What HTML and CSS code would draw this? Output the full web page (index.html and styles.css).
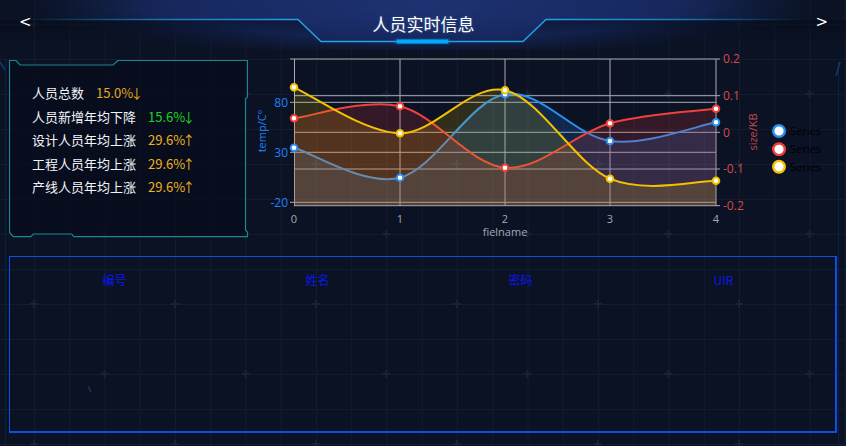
FILE: index.html
```html
<!DOCTYPE html>
<html lang="zh-CN">
<head>
<meta charset="utf-8">
<title>人员实时信息</title>
<link rel="stylesheet" href="styles.css">
</head>
<body>
<div class="screen">
  <svg class="bg-grid" width="846" height="446" viewBox="0 0 846 446" aria-hidden="true">
    <defs>
      <pattern id="gridp" patternUnits="userSpaceOnUse" x="34" y="24" width="35.25" height="35">
        <path d="M0.5,0 V35 M0,0.5 H35.25" stroke="#121b30" stroke-width="1" fill="none"/>
      </pattern>
      <pattern id="crossp" patternUnits="userSpaceOnUse" x="24" y="14" width="141" height="140">
        <path d="M6,10 H14 M10,6 V14 M76.5,80 H84.5 M80.5,76 V84" stroke="#1a2336" stroke-width="2" fill="none"/>
      </pattern>
    </defs>
    <rect width="846" height="446" fill="url(#gridp)"/>
    <rect width="846" height="446" fill="url(#crossp)"/>
    <path d="M5.5,60 V446 M838.5,62 V446" stroke="#0c2142" stroke-width="1"/>
    <path d="M0,62 L5,70 M836,76 L840,62 M88,386 L91,392" stroke="#123a6e" stroke-width="1.5"/>
  </svg>

  <header class="top">
    <svg class="top-deco" width="846" height="50" viewBox="0 0 846 50" aria-hidden="true">
      <defs>
        <radialGradient id="glow" cx="423" cy="6" r="420" gradientUnits="userSpaceOnUse" gradientTransform="translate(423 6) scale(1 0.13) translate(-423 -6)">
          <stop offset="0" stop-color="#1e3273"/>
          <stop offset="0.6" stop-color="#17285e"/>
          <stop offset="1" stop-color="#0a1223" stop-opacity="0"/>
        </radialGradient>
        <linearGradient id="lineg" x1="0" y1="0" x2="846" y2="0" gradientUnits="userSpaceOnUse">
          <stop offset="0.02" stop-color="#1a8fd0" stop-opacity="0"/>
          <stop offset="0.2" stop-color="#1a8fd0" stop-opacity="0.8"/>
          <stop offset="0.36" stop-color="#20a4ec"/>
          <stop offset="0.64" stop-color="#20a4ec"/>
          <stop offset="0.8" stop-color="#1a8fd0" stop-opacity="0.8"/>
          <stop offset="0.95" stop-color="#1a8fd0" stop-opacity="0"/>
        </linearGradient>
        <linearGradient id="shade" x1="0" y1="20" x2="0" y2="44" gradientUnits="userSpaceOnUse">
          <stop offset="0" stop-color="#050a16" stop-opacity="0.55"/>
          <stop offset="1" stop-color="#050a16" stop-opacity="0"/>
        </linearGradient>
      </defs>
      <rect x="0" y="0" width="846" height="50" fill="url(#glow)"/>
      <path d="M0,0 H846 V19.5 H546 L523,41 H321 L298,19.5 H0 Z" fill="url(#glow)"/>
      <path d="M0,20 H298 L321,42 H523 L546,20 H846 V44 H0 Z" fill="url(#shade)"/>
      <path d="M0,19.5 H298 L321,41.5 H523 L546,19.5 H846" fill="none" stroke="url(#lineg)" stroke-width="1.3"/>
      <rect x="397" y="39.5" width="51" height="4" fill="#00aaff"/>
      <rect x="395" y="38.5" width="55" height="6" fill="#00aaff" opacity="0.25"/>
    </svg>
    <span class="nav nav-prev">&lt;</span>
    <h1 class="title">人员实时信息</h1>
    <span class="nav nav-next">&gt;</span>
  </header>

  <section class="main">
    <div class="stats">
      <svg class="stats-frame" width="239" height="178" viewBox="0 0 239 178" aria-hidden="true">
        <path d="M0.5,0.5 L7,0.5 L11,5 L104,5 L109,0.5 L238.5,0.5 L238.5,37 L236.5,39 L236.5,170 L238.5,172 L238.5,176.7 L65,176.7 L62.7,174 L24.3,174 L21.7,176.7 L4.3,176.7 L0.5,172.3 Z" fill="#060c1b" fill-opacity="0.7" stroke="#178890" stroke-width="1.2"/>
      </svg>
      <ul class="stat-list">
        <li><span class="label">人员总数</span><span class="val gold">15.0<span class="pct">%</span>↓</span></li>
        <li><span class="label">人员新增年均下降</span><span class="val green">15.6<span class="pct">%</span>↓</span></li>
        <li><span class="label">设计人员年均上涨</span><span class="val yellow">29.6<span class="pct">%</span>↑</span></li>
        <li><span class="label">工程人员年均上涨</span><span class="val yellow">29.6<span class="pct">%</span>↑</span></li>
        <li><span class="label">产线人员年均上涨</span><span class="val yellow">29.6<span class="pct">%</span>↑</span></li>
      </ul>
    </div>

    <div class="chart">
      <svg width="598" height="190" viewBox="248 50 598 190">
        <g class="grid" stroke="#c9c9cc" stroke-width="1" fill="none" opacity="0.85">
          <path d="M294,59 H716 M290,59 H294 M716,59 H720"/>
          <path d="M294,95.7 H720"/>
          <path d="M290,102.3 H716"/>
          <path d="M294,132.3 H720"/>
          <path d="M290,152.3 H716"/>
          <path d="M294,169 H720"/>
          <path d="M290,202.3 H716"/>
          <path d="M294,205.7 H720"/>
          <path d="M294.5,59 V206 M400,59 V206 M505,59 V206 M610,59 V206 M716,59 V206"/>
        </g>

        <path d="M294,147.7 C311.7,152.7 364.8,186.6 400,177.7 C435.2,168.8 470,100.4 505,94.3 C540,88.2 574.8,136.3 610,141 C645.2,145.7 698.3,125.4 716,122.3 L716,205 L294,205 Z" fill="#1e90ff" fill-opacity="0.18"/>
        <path d="M294,147.7 C311.7,152.7 364.8,186.6 400,177.7 C435.2,168.8 470,100.4 505,94.3 C540,88.2 574.8,136.3 610,141 C645.2,145.7 698.3,125.4 716,122.3" fill="none" stroke="#2a8ff0" stroke-width="2"/>

        <path d="M294,118.3 C311.7,116.3 364.8,98.1 400,106.3 C435.2,114.5 470,164.9 505,167.7 C540,170.5 574.8,133.1 610,123.3 C645.2,113.5 698.3,111.1 716,108.7 L716,205 L294,205 Z" fill="#f03c3c" fill-opacity="0.18"/>
        <path d="M294,118.3 C311.7,116.3 364.8,98.1 400,106.3 C435.2,114.5 470,164.9 505,167.7 C540,170.5 574.8,133.1 610,123.3 C645.2,113.5 698.3,111.1 716,108.7" fill="none" stroke="#f0403c" stroke-width="2"/>

        <path d="M294,87.3 C311.7,95 364.8,132.8 400,133.3 C435.2,133.8 470,82.7 505,90.3 C540,97.9 574.8,163.6 610,178.7 C645.2,193.8 698.3,180.4 716,180.7 L716,205 L294,205 Z" fill="#f5c000" fill-opacity="0.16"/>
        <path d="M294,87.3 C311.7,95 364.8,132.8 400,133.3 C435.2,133.8 470,82.7 505,90.3 C540,97.9 574.8,163.6 610,178.7 C645.2,193.8 698.3,180.4 716,180.7" fill="none" stroke="#f5c000" stroke-width="2"/>

        <g fill="#ffffff" stroke-width="2">
          <g stroke="#2a8ff0">
            <circle cx="294" cy="147.7" r="3.3"/><circle cx="400" cy="177.7" r="3.3"/><circle cx="505" cy="94.3" r="3.3"/><circle cx="610" cy="141" r="3.3"/><circle cx="716" cy="122.3" r="3.3"/>
          </g>
          <g stroke="#f0403c">
            <circle cx="294" cy="118.3" r="3.3"/><circle cx="400" cy="106.3" r="3.3"/><circle cx="505" cy="167.7" r="3.3"/><circle cx="610" cy="123.3" r="3.3"/><circle cx="716" cy="108.7" r="3.3"/>
          </g>
          <g stroke="#f5c000">
            <circle cx="294" cy="87.3" r="3.3"/><circle cx="400" cy="133.3" r="3.3"/><circle cx="505" cy="90.3" r="3.3"/><circle cx="610" cy="178.7" r="3.3"/><circle cx="716" cy="180.7" r="3.3"/>
          </g>
        </g>

        <g class="ylab-left" text-anchor="end">
          <text x="288" y="106.5">80</text>
          <text x="288" y="156.5">30</text>
          <text x="288" y="206.5">-20</text>
        </g>
        <g class="ylab-right" text-anchor="start">
          <text x="723" y="63.2">0.2</text>
          <text x="723" y="99.9">0.1</text>
          <text x="723" y="136.5">0</text>
          <text x="723" y="173.2">-0.1</text>
          <text x="723" y="209.9">-0.2</text>
        </g>
        <g class="xlab" text-anchor="middle">
          <text x="294" y="222.5">0</text>
          <text x="400" y="222.5">1</text>
          <text x="505" y="222.5">2</text>
          <text x="610" y="222.5">3</text>
          <text x="716" y="222.5">4</text>
          <text x="505" y="235.5">fielname</text>
        </g>
        <text class="yname-left" transform="translate(266 131) rotate(-90)" text-anchor="middle">temp/C°</text>
        <text class="yname-right" transform="translate(757 132) rotate(-90)" text-anchor="middle">size/KB</text>

        <g class="legend">
          <circle cx="779" cy="131" r="5.8" fill="#ffffff" stroke="#2a8ff0" stroke-width="2.4"/>
          <circle cx="779" cy="149.3" r="5.8" fill="#ffffff" stroke="#f0403c" stroke-width="2.4"/>
          <circle cx="779" cy="166.7" r="5.8" fill="#ffffff" stroke="#f5c000" stroke-width="2.4"/>
          <text x="790" y="135">Series</text>
          <text x="790" y="153.3">Series</text>
          <text x="790" y="170.7">Series</text>
        </g>
      </svg>
    </div>
  </section>

  <section class="table-box">
    <div class="thead">
      <span>编号</span>
      <span>姓名</span>
      <span>密码</span>
      <span>UIR</span>
    </div>
  </section>
</div>
</body>
</html>
```

FILE: styles.css
```css
* {
  box-sizing: border-box;
}

html, body {
  margin: 0;
  padding: 0;
  background: #0a1223;
}

.screen {
  position: relative;
  width: 846px;
  height: 446px;
  overflow: hidden;
  background: #0a1223;
  font-family: "Noto Sans CJK SC", "Noto Sans", sans-serif;
  color: #ffffff;
}

.bg-grid {
  position: absolute;
  left: 0;
  top: 0;
  z-index: 0;
}

.top {
  position: relative;
  z-index: 1;
  height: 50px;
  display: grid;
  grid-template-columns: 1fr auto 1fr;
  align-items: start;
  padding: 0 18px 0 19px;
}

.top-deco {
  position: absolute;
  left: 0;
  top: 0;
  z-index: -1;
}

.nav {
  margin-top: 11px;
  font-family: "DejaVu Sans", sans-serif;
  font-size: 15px;
  line-height: 22px;
  color: #ffffff;
}

.nav-next {
  justify-self: end;
}

.title {
  margin: 12px 0 0;
  font-size: 17px;
  font-weight: 400;
  line-height: 24px;
  color: #ffffff;
  text-shadow: 0 0 3px rgba(120, 180, 255, 0.35);
}

.main {
  position: relative;
  z-index: 1;
  display: flex;
  height: 190px;
}

.stats {
  position: relative;
  margin: 10px 0 0 9px;
  width: 239px;
  height: 178px;
}

.stats-frame {
  position: absolute;
  left: 0;
  top: 0;
}

.stat-list {
  position: relative;
  list-style: none;
  margin: 0;
  padding: 21px 0 0 23px;
  font-size: 13px;
  line-height: 23.5px;
}

.stat-list li {
  display: flex;
  white-space: nowrap;
}

.label {
  color: #f2f4f8;
}

.val {
  margin-left: 12px;
}

.pct {
  letter-spacing: -3px;
}

.gold {
  color: #e6a81a;
}

.green {
  color: #1ed41e;
}

.yellow {
  color: #f2b21e;
}

.chart svg {
  display: block;
}

.chart text {
  font-family: "Open Sans", "Noto Sans", sans-serif;
}

.ylab-left {
  fill: #2181fa;
  font-size: 12px;
}

.ylab-right {
  fill: #d8484c;
  font-size: 12px;
}

.xlab {
  fill: #a2a9b6;
  font-size: 11px;
}

.yname-left {
  fill: #2181fa;
  font-size: 11px;
}

.yname-right {
  fill: #c8464c;
  font-size: 11px;
}

.legend text {
  fill: #000000;
  font-size: 11px;
}

.table-box {
  position: relative;
  z-index: 1;
  margin: 16px 0 0 9px;
  width: 828px;
  height: 177px;
  border-style: solid;
  border-color: #0b4fe6;
  border-width: 1px 2px 2px 1px;
  padding: 15px 0 0 3px;
}

.thead {
  display: grid;
  grid-template-columns: repeat(4, 203px);
  font-size: 12px;
  line-height: 16px;
  color: #0a16f2;
  text-align: center;
}
```
